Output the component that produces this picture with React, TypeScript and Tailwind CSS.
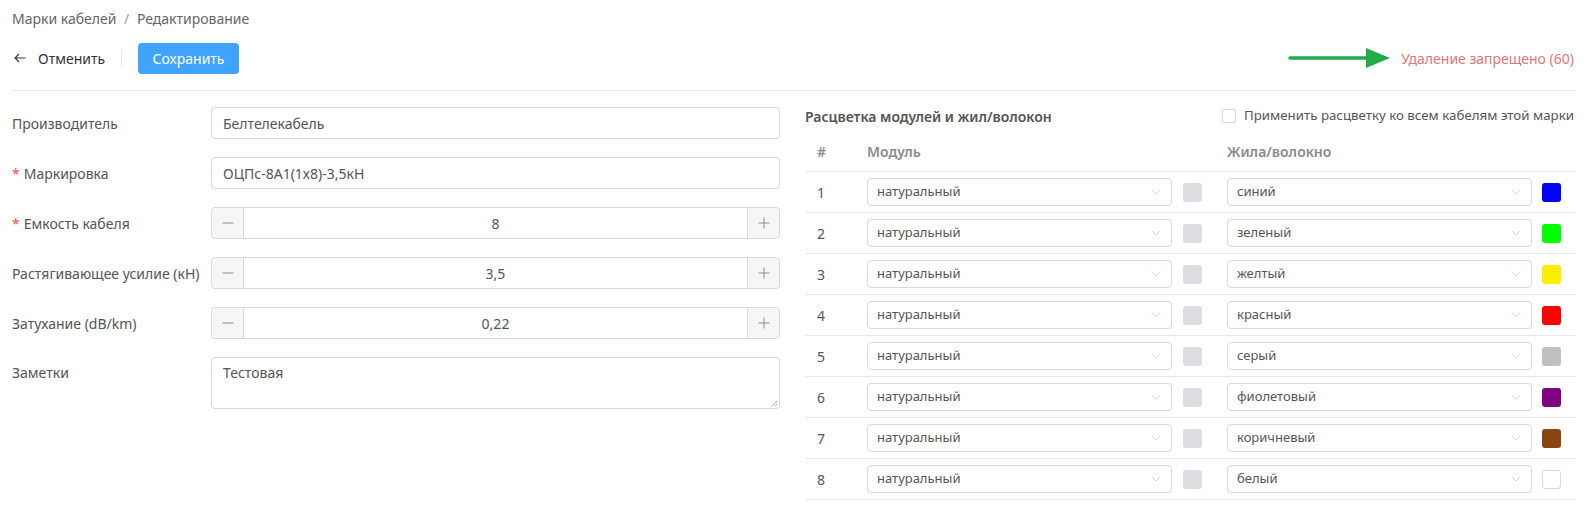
import { ChevronDown } from "lucide-react";

const FONT = { fontFamily: '"Noto Sans", "Open Sans", sans-serif' };

type Fiber = { num: number; name: string; color: string };

const fibers: Fiber[] = [
  { num: 1, name: "синий", color: "bg-[#0000ff]" },
  { num: 2, name: "зеленый", color: "bg-[#00ff00]" },
  { num: 3, name: "желтый", color: "bg-[#ffee00]" },
  { num: 4, name: "красный", color: "bg-[#ff0000]" },
  { num: 5, name: "серый", color: "bg-[#c0c0c0]" },
  { num: 6, name: "фиолетовый", color: "bg-[#800080]" },
  { num: 7, name: "коричневый", color: "bg-[#8b4513]" },
  { num: 8, name: "белый", color: "bg-white border border-[#d9d9d9]" },
];

function FormLabel({ text, required }: { text: string; required?: boolean }) {
  return (
    <div className="text-[14px] text-[#555]">
      {required && <span className="text-[#ff4d4f] mr-[4px]">*</span>}
      {text}
    </div>
  );
}

function TextInput({ value }: { value: string }) {
  return (
    <div className="h-[32px] flex items-center border border-[#d9d9d9] rounded-[4px] px-[11px] text-[14px] text-[#555]">
      {value}
    </div>
  );
}

function NumberInput({ value }: { value: string }) {
  return (
    <div className="h-[32px] flex border border-[#d9d9d9] rounded-[4px] text-[14px] text-[#555]">
      <div className="w-[32px] flex items-center justify-center bg-[#f5f6f8] border-r border-[#d9d9d9] rounded-l-[4px]">
        <svg width="12" height="12" viewBox="0 0 12 12">
          <path d="M0.5 6h11" stroke="#8c8c8c" strokeWidth="1" />
        </svg>
      </div>
      <div className="flex-1 flex items-center justify-center">{value}</div>
      <div className="w-[32px] flex items-center justify-center bg-[#f5f6f8] border-l border-[#d9d9d9] rounded-r-[4px]">
        <svg width="12" height="12" viewBox="0 0 12 12">
          <path d="M0.5 6h11M6 0.5v11" stroke="#8c8c8c" strokeWidth="1" />
        </svg>
      </div>
    </div>
  );
}

function SmallSelect({ value }: { value: string }) {
  return (
    <div className="w-[305px] h-[28px] flex items-center justify-between border border-[#d9d9d9] rounded-[4px] pl-[9px] pr-[7px] text-[13px] text-[#555]">
      <span>{value}</span>
      <ChevronDown size={16} strokeWidth={1} className="text-[#c4c4c4]" />
    </div>
  );
}

function GreenArrow() {
  return (
    <svg width="104" height="22" viewBox="0 0 104 22" className="mr-[9px]">
      <path d="M2 11h78" stroke="#22aa4b" strokeWidth="3.5" strokeLinecap="round" />
      <path d="M78 1l24 10-24 10z" fill="#22aa4b" />
    </svg>
  );
}

export default function App() {
  return (
    <div className="min-h-screen bg-white px-[12px] pb-4" style={FONT}>
      {/* хлебные крошки */}
      <div className="pt-[8px] leading-[22px] text-[14px] text-[#666]">
        Марки кабелей <span className="mx-[4px] text-[#999]">/</span> Редактирование
      </div>

      {/* панель действий */}
      <div className="mt-[12px] h-[32px] flex items-center justify-between">
        <div className="flex items-center">
          <div className="flex items-center text-[14px] text-[#333]">
            <svg width="12" height="10" viewBox="0 0 12 10" className="ml-[2px] mr-[12px]">
              <path d="M11.5 5H1M5 1L1 5l4 4" fill="none" stroke="#333" strokeWidth="1.1" />
            </svg>
            Отменить
          </div>
          <div className="w-px h-[16px] bg-[#e8e8e8] ml-[16px] mr-[16px]" />
          <button className="h-[31px] w-[101px] rounded-[4px] bg-[#40a3ff] text-white text-[14px]">
            Сохранить
          </button>
        </div>
        <div className="flex items-center pr-[2px]">
          <GreenArrow />
          <span className="text-[14px] text-[#dc7775]">Удаление запрещено (60)</span>
        </div>
      </div>

      <div className="mt-[16px] border-t border-[#e8e8e8]" />

      <div className="flex">
        {/* левая форма */}
        <div className="w-[768px] pt-[16px] flex flex-col gap-[18px]">
          <div className="grid grid-cols-[199px_1fr] items-center">
            <FormLabel text="Производитель" />
            <TextInput value="Белтелекабель" />
          </div>
          <div className="grid grid-cols-[199px_1fr] items-center">
            <FormLabel text="Маркировка" required />
            <TextInput value="ОЦПс-8А1(1х8)-3,5кН" />
          </div>
          <div className="grid grid-cols-[199px_1fr] items-center">
            <FormLabel text="Емкость кабеля" required />
            <NumberInput value="8" />
          </div>
          <div className="grid grid-cols-[199px_1fr] items-center">
            <FormLabel text="Растягивающее усилие (кН)" />
            <NumberInput value="3,5" />
          </div>
          <div className="grid grid-cols-[199px_1fr] items-center">
            <FormLabel text="Затухание (dB/km)" />
            <NumberInput value="0,22" />
          </div>
          <div className="grid grid-cols-[199px_1fr] items-start">
            <div className="pt-[5px]">
              <FormLabel text="Заметки" />
            </div>
            <div className="relative h-[52px] border border-[#d9d9d9] rounded-[4px] px-[11px] pt-[4px] text-[14px] text-[#555]">
              Тестовая
              <svg width="8" height="8" viewBox="0 0 8 8" className="absolute right-[1px] bottom-[1px]">
                <path d="M7.5 1.5L1.5 7.5M7.5 4.5L4.5 7.5" stroke="#999" strokeWidth="0.8" />
              </svg>
            </div>
          </div>
        </div>

        {/* правая таблица расцветки */}
        <div className="flex-1 ml-[25px]">
          <div className="mt-[13px] h-[24px] flex items-center justify-between pr-[2px]">
            <div className="text-[14px] font-semibold text-[#555]">Расцветка модулей и жил/волокон</div>
            <div className="flex items-center text-[13.3px] text-[#555]">
              <div className="w-[14px] h-[14px] border border-[#d9d9d9] rounded-[2px] mr-[8px]" />
              Применить расцветку ко всем кабелям этой марки
            </div>
          </div>

          <div className="h-[44px] pt-[4px] flex items-center border-b border-[#e8e8e8] text-[14px] font-semibold text-[#8c8c8c]">
            <div className="w-[62px] pl-[12px]">#</div>
            <div className="w-[360px]">Модуль</div>
            <div>Жила/волокно</div>
          </div>

          {fibers.map((f) => (
            <div key={f.num} className="h-[41px] flex items-center border-b border-[#e8e8e8]">
              <div className="w-[62px] pl-[12px] text-[14px] text-[#555]">{f.num}</div>
              <SmallSelect value="натуральный" />
              <div className="w-[19px] h-[19px] rounded-[3px] bg-[#dcdce1] ml-[11px]" />
              <div className="ml-[25px]">
                <SmallSelect value={f.name} />
              </div>
              <div className={`w-[19px] h-[19px] rounded-[3px] ml-[10px] ${f.color}`} />
            </div>
          ))}
        </div>
      </div>
    </div>
  );
}
